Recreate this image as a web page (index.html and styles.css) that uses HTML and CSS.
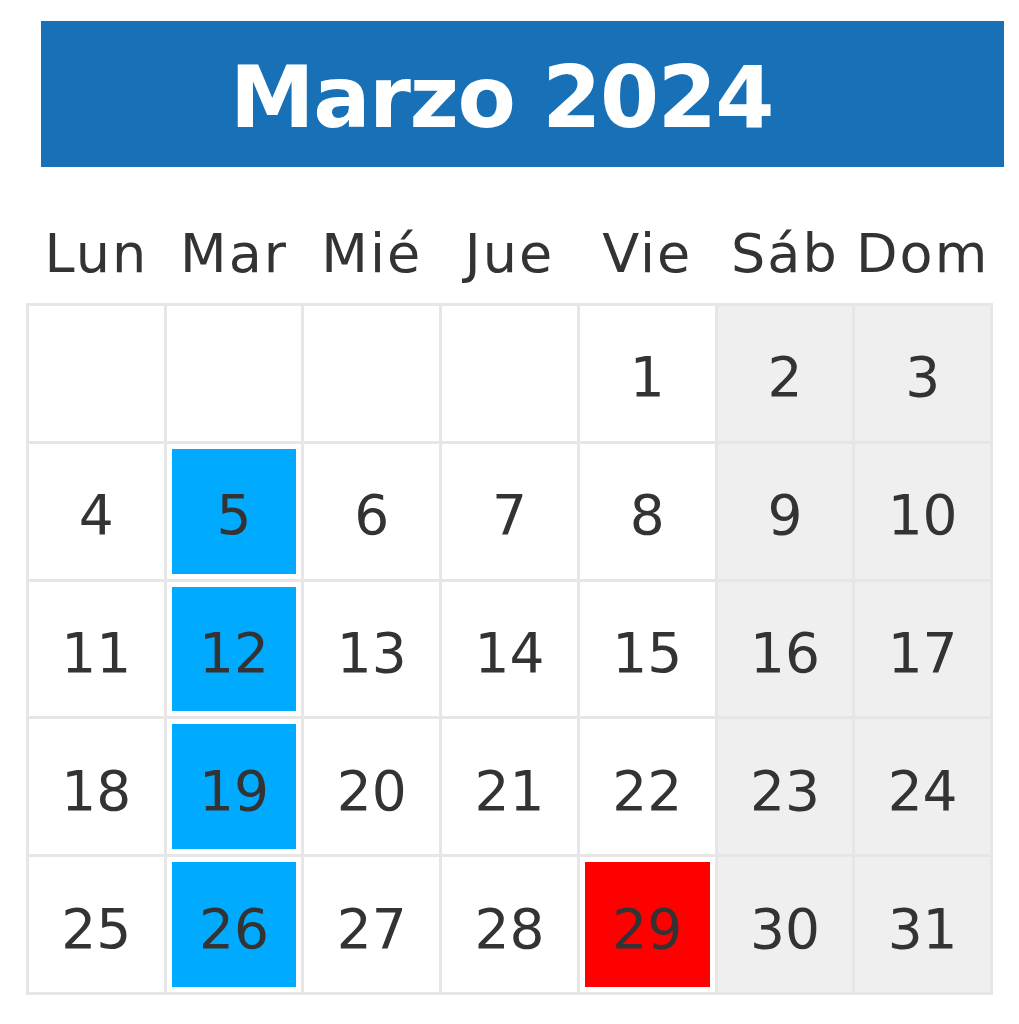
FILE: index.html
```html
<!DOCTYPE html>
<html lang="es">
<head>
<meta charset="utf-8">
<title>Marzo 2024</title>
<link rel="stylesheet" href="styles.css">
</head>
<body>
<div class="page">
  <div class="title-bar"><h1 class="title">Marzo 2024</h1></div>
  <div class="weekdays">
    <div class="wd">Lun</div><div class="wd">Mar</div><div class="wd">Mié</div><div class="wd">Jue</div><div class="wd">Vie</div><div class="wd">Sáb</div><div class="wd">Dom</div>
  </div>
  <div class="grid">
    <div class="cell"></div><div class="cell"></div><div class="cell"></div><div class="cell"></div>
    <div class="cell"><span>1</span></div><div class="cell we"><span>2</span></div><div class="cell we"><span>3</span></div>

    <div class="cell"><span>4</span></div><div class="cell"><span class="mark blue">5</span></div><div class="cell"><span>6</span></div><div class="cell"><span>7</span></div>
    <div class="cell"><span>8</span></div><div class="cell we"><span>9</span></div><div class="cell we"><span>10</span></div>

    <div class="cell"><span>11</span></div><div class="cell"><span class="mark blue">12</span></div><div class="cell"><span>13</span></div><div class="cell"><span>14</span></div>
    <div class="cell"><span>15</span></div><div class="cell we"><span>16</span></div><div class="cell we"><span>17</span></div>

    <div class="cell"><span>18</span></div><div class="cell"><span class="mark blue">19</span></div><div class="cell"><span>20</span></div><div class="cell"><span>21</span></div>
    <div class="cell"><span>22</span></div><div class="cell we"><span>23</span></div><div class="cell we"><span>24</span></div>

    <div class="cell"><span>25</span></div><div class="cell"><span class="mark blue">26</span></div><div class="cell"><span>27</span></div><div class="cell"><span>28</span></div>
    <div class="cell"><span class="mark red">29</span></div><div class="cell we"><span>30</span></div><div class="cell we"><span>31</span></div>
  </div>
</div>
</body>
</html>
```
FILE: styles.css
```css
* { box-sizing: border-box; }
html, body { margin: 0; padding: 0; background: #ffffff; }
body { font-family: "DejaVu Sans", "Open Sans", sans-serif; color: #333333; }
.page { width: 1019px; height: 1024px; padding-top: 21px; }
.title-bar {
  margin-left: 41px;
  width: 963px;
  height: 146px;
  background: #1871b6;
  display: flex;
  align-items: center;
  justify-content: center;
  padding-top: 6px;
  padding-right: 42px;
}
.title {
  margin: 0;
  color: #ffffff;
  font-size: 85px;
  font-weight: 700;
  letter-spacing: -1.5px;
}
.weekdays {
  margin-left: 26px;
  width: 967px;
  height: 136px;
  display: grid;
  grid-template-columns: repeat(7, 1fr);
  align-items: center;
  padding: 0 3px;
  column-gap: 3px;
  padding-top: 36px;
}
.wd {
  text-align: center;
  font-size: 54px;
  font-weight: 400;
  letter-spacing: 2px;
  color: #333333;
}
.grid {
  margin-left: 26px;
  width: 967px;
  height: 692px;
  background: #e6e6e6;
  padding: 3px;
  display: grid;
  grid-template-columns: repeat(7, 1fr);
  grid-template-rows: repeat(5, 1fr);
  gap: 3px;
}
.cell {
  background: #ffffff;
  display: flex;
  align-items: stretch;
  justify-content: stretch;
  padding: 5px;
}
.cell.we { background: #efefef; }
.cell span {
  flex: 1;
  display: flex;
  align-items: center;
  justify-content: center;
  font-size: 55px;
  color: #333333;
  padding-top: 8px;
}
.mark.blue { background: #00aaff; }
.mark.red { background: #ff0000; }
```
